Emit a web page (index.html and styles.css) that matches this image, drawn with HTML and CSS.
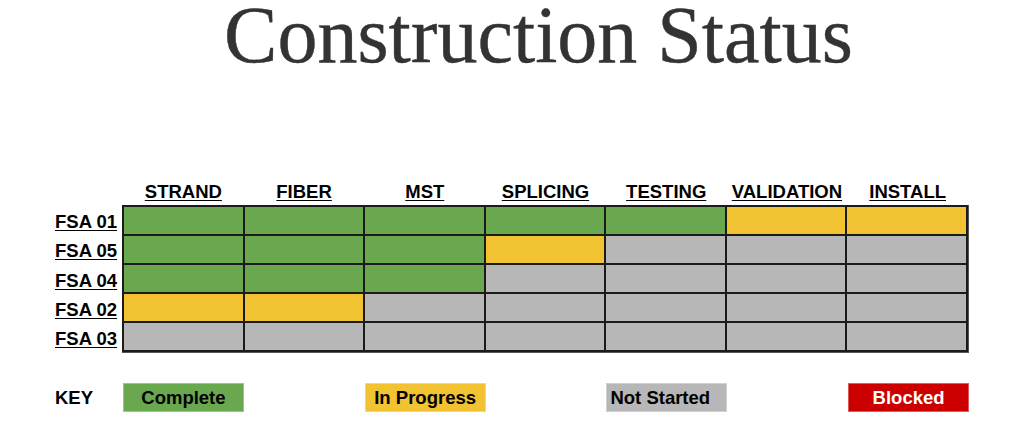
FILE: index.html
```html
<!DOCTYPE html>
<html lang="en">
<head>
<meta charset="utf-8">
<title>Construction Status</title>
<link rel="stylesheet" href="styles.css">
</head>
<body>
<h1 class="title">Construction Status</h1>

<div class="board">
  <div class="row header-row">
    <div class="label"></div>
    <div class="cols heads">
      <div class="head">STRAND</div>
      <div class="head">FIBER</div>
      <div class="head">MST</div>
      <div class="head">SPLICING</div>
      <div class="head">TESTING</div>
      <div class="head">VALIDATION</div>
      <div class="head">INSTALL</div>
    </div>
  </div>

  <div class="row">
    <div class="labels">
      <div class="label fsa">FSA 01</div>
      <div class="label fsa">FSA 05</div>
      <div class="label fsa">FSA 04</div>
      <div class="label fsa">FSA 02</div>
      <div class="label fsa">FSA 03</div>
    </div>
    <div class="cols grid">
      <div class="cell done"></div><div class="cell done"></div><div class="cell done"></div><div class="cell done"></div><div class="cell done"></div><div class="cell prog"></div><div class="cell prog"></div>
      <div class="cell done"></div><div class="cell done"></div><div class="cell done"></div><div class="cell prog"></div><div class="cell todo"></div><div class="cell todo"></div><div class="cell todo"></div>
      <div class="cell done"></div><div class="cell done"></div><div class="cell done"></div><div class="cell todo"></div><div class="cell todo"></div><div class="cell todo"></div><div class="cell todo"></div>
      <div class="cell prog"></div><div class="cell prog"></div><div class="cell todo"></div><div class="cell todo"></div><div class="cell todo"></div><div class="cell todo"></div><div class="cell todo"></div>
      <div class="cell todo"></div><div class="cell todo"></div><div class="cell todo"></div><div class="cell todo"></div><div class="cell todo"></div><div class="cell todo"></div><div class="cell todo"></div>
    </div>
  </div>

  <div class="row key-row">
    <div class="label key-label">KEY</div>
    <div class="keys">
      <div class="key done">Complete</div>
      <div class="key-gap"></div>
      <div class="key prog">In Progress</div>
      <div class="key-gap"></div>
      <div class="key todo left">Not Started</div>
      <div class="key-gap"></div>
      <div class="key blocked">Blocked</div>
    </div>
  </div>
</div>
</body>
</html>
```

FILE: styles.css
```css
html, body {
  margin: 0;
  padding: 0;
  background: #ffffff;
}

body {
  width: 1024px;
  height: 445px;
  overflow: hidden;
  font-family: "Liberation Sans", Arial, sans-serif;
  color: #000;
}

.title {
  margin: 0;
  padding-left: 53px;
  font-family: "Liberation Serif", "Times New Roman", serif;
  font-weight: 400;
  font-size: 80px;
  line-height: 70px;
  height: 70px;
  text-align: center;
  color: #333333;
  -webkit-text-stroke: 0.4px #333333;
}

.board {
  display: flex;
  flex-direction: column;
  width: 969px;
}

.row {
  display: flex;
}

.header-row {
  margin-top: 112px;
  margin-bottom: 3px;
}

.label, .labels {
  width: 122px;
  flex: none;
  box-sizing: border-box;
}

.label {
  padding-left: 55px;
  font-weight: 700;
  font-size: 18.5px;
  line-height: 20px;
}

.cols {
  flex: 1;
  display: grid;
  grid-template-columns: repeat(7, 1fr);
}

.heads {
  padding: 0 2px;
  column-gap: 2px;
}

.head {
  text-align: center;
  font-weight: 700;
  font-size: 18.5px;
  line-height: 20px;
  text-decoration: underline;
  text-underline-offset: 2px;
  text-decoration-thickness: 1px;
  white-space: nowrap;
}

.labels {
  display: flex;
  flex-direction: column;
  padding: 2px 0;
  gap: 2px;
}

.fsa {
  flex: 1;
  display: flex;
  align-items: center;
  padding-top: 3px;
  text-decoration: underline;
  text-underline-offset: 2px;
  text-decoration-thickness: 1px;
}

.grid {
  height: 148px;
  box-sizing: border-box;
  background: #1b1b1b;
  padding: 2px;
  gap: 2px;
  grid-template-rows: repeat(5, 1fr);
  border-right: 1px solid #555;
  border-bottom: 1px solid #555;
}

.done { background: #6aa84f; }
.prog { background: #f1c232; }
.todo { background: #b7b7b7; }
.blocked { background: #cc0000; color: #ffffff; }

.key-row {
  margin-top: 30px;
  align-items: center;
}

.keys {
  flex: 1;
  display: grid;
  grid-template-columns: repeat(7, 1fr);
  padding-left: 1px;
  column-gap: 0;
}

.key {
  height: 29px;
  box-sizing: border-box;
  border: 1px solid rgba(255, 255, 255, 0.35);
  display: flex;
  align-items: center;
  justify-content: center;
  font-weight: 700;
  font-size: 18.5px;
  line-height: 20px;
  white-space: nowrap;
}

.key.left {
  justify-content: flex-start;
  padding-left: 3px;
}
```
